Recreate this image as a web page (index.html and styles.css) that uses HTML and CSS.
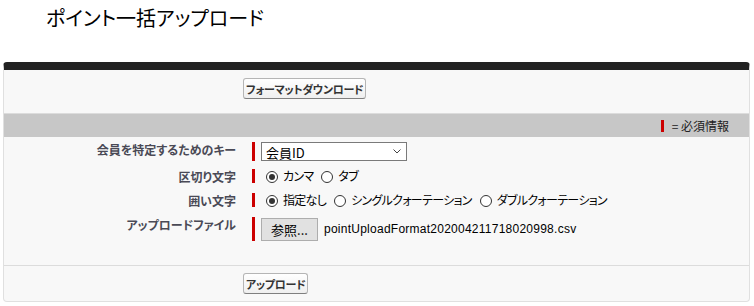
FILE: index.html
```html
<!DOCTYPE html>
<html lang="ja">
<head>
    <meta charset="UTF-8">
    <title>ポイント一括アップロード</title>
    <link rel="stylesheet" href="styles.css">
</head>
<body>
    <h1 class="page-title">ポイント一括アップロード</h1>
    <div class="panel">
        <div class="panel-top">
            <button type="button" class="btn">フォーマットダウンロード</button>
        </div>
        <div class="section-bar">
            <span class="req-mark"></span><span>= 必須情報</span>
        </div>
        <div class="form-body">
            <div class="form-row first">
                <div class="label">会員を特定するためのキー</div>
                <div class="field">
                    <span class="select-wrap">
                        <select class="select"><option>会員ID</option></select>
                        <svg class="chevron" width="8" height="5" viewBox="0 0 8 5"><path d="M0.5 0.5 L4 4 L7.5 0.5" fill="none" stroke="#444" stroke-width="1"/></svg>
                    </span>
                </div>
            </div>
            <div class="form-row">
                <div class="label">区切り文字</div>
                <div class="field radios">
                    <label class="opt"><input type="radio" name="sep" checked>カンマ</label>
                    <label class="opt"><input type="radio" name="sep">タブ</label>
                </div>
            </div>
            <div class="form-row">
                <div class="label">囲い文字</div>
                <div class="field radios">
                    <label class="opt"><input type="radio" name="quote" checked>指定なし</label>
                    <label class="opt"><input type="radio" name="quote">シングルクォーテーション</label>
                    <label class="opt"><input type="radio" name="quote">ダブルクォーテーション</label>
                </div>
            </div>
            <div class="form-row">
                <div class="label">アップロードファイル</div>
                <div class="field file">
                    <button type="button" class="file-btn">参照...</button>
                    <span class="file-name">pointUploadFormat202004211718020998.csv</span>
                </div>
            </div>
        </div>
        <div class="panel-bottom">
            <button type="button" class="btn">アップロード</button>
        </div>
    </div>
</body>
</html>
```

FILE: styles.css
```css
body {
    margin: 0;
    background: #fff;
    font-family: Arial, "Liberation Sans", "Noto Sans CJK JP", sans-serif;
    font-feature-settings: "palt";
    color: #000;
}
.page-title {
    margin: 0;
    padding: 4px 0 0 46px;
    font-size: 20px;
    line-height: 28px;
    font-weight: normal;
    font-family: "Noto Sans CJK JP", sans-serif;
}
.panel {
    margin: 30px 0 0 3px;
    width: 745px;
    background: #f8f8f8;
    border: 1px solid #e0e0e0;
    border-top: 8px solid #222;
    border-radius: 4px;
}
.panel-top {
    padding: 8px 0 0 239px;
    height: 35px;
    border-bottom: 1px solid #dcdcdc;
}
.btn {
    font-family: "Noto Sans CJK JP", sans-serif;
    font-feature-settings: "palt";
    font-size: 11px;
    font-weight: bold;
    color: #333;
    background: linear-gradient(#fff, #efefef);
    border: 1px solid #b5b5b5;
    border-bottom-color: #7f7f7f;
    border-radius: 3px;
    height: 21px;
    padding: 0 2px;
    letter-spacing: -0.3px;
    line-height: 18px;
}
.section-bar {
    height: 23px;
    background: #c7c7c7;
    display: flex;
    align-items: center;
    justify-content: flex-end;
    padding-right: 20px;
    font-size: 12px;
    font-family: "Noto Sans CJK JP", sans-serif;
    color: #222;
}
.req-mark {
    width: 3px;
    height: 12px;
    background: #c00;
    margin-right: 8px;
}
.form-body {
    padding: 5px 0 24px;
    display: flex;
    flex-direction: column;
    gap: 10px;
    border-bottom: 1px solid #dcdcdc;
}
.form-row {
    display: grid;
    grid-template-columns: 248px 1fr;
    align-items: start;
}
.form-row.first {
    margin-bottom: -2px;
}
.label {
    text-align: right;
    padding: 2px 16px 0 0;
    font-size: 12px;
    font-weight: bold;
    color: #4a4a56;
    font-family: "Noto Sans CJK JP", sans-serif;
    line-height: 12px;
}
.field {
    border-left: 3px solid #c00;
    padding-left: 6px;
    display: flex;
    align-items: center;
}
.select-wrap {
    position: relative;
    display: block;
    height: 19px;
}
.select {
    appearance: none;
    -webkit-appearance: none;
    width: 146px;
    height: 19px;
    border: 1px solid #7a7a7a;
    border-radius: 0;
    background: #fff;
    font-family: "Noto Sans CJK JP", sans-serif;
    font-size: 13px;
    padding: 0 4px;
    color: #000;
    display: block;
}
.chevron {
    position: absolute;
    right: 6px;
    top: 7px;
    pointer-events: none;
}
.radios {
    gap: 8px;
    height: 14px;
    padding-left: 11px;
}
.opt {
    display: flex;
    align-items: center;
    font-size: 12px;
    letter-spacing: -0.7px;
    font-family: "Noto Sans CJK JP", sans-serif;
    line-height: 14px;
    height: 14px;
}
.opt input {
    appearance: none;
    -webkit-appearance: none;
    width: 12px;
    height: 12px;
    margin: 2px 5px 0 0;
    border: 1px solid #333;
    border-radius: 50%;
    background: #fff;
    position: relative;
}
.opt input:checked::after {
    content: "";
    position: absolute;
    left: 2px;
    top: 2px;
    width: 6px;
    height: 6px;
    border-radius: 50%;
    background: #333;
}
.file {
    height: 24px;
    gap: 6px;
}
.file-btn {
    height: 23px;
    width: 57px;
    border: 1px solid #adadad;
    background: #e1e1e1;
    font-family: "Noto Sans CJK JP", sans-serif;
    font-size: 13px;
    color: #000;
    padding: 0;
}
.file-name {
    font-size: 12px;
    letter-spacing: 0.25px;
}
.panel-bottom {
    padding: 7px 0 0 239px;
    height: 28px;
}
```
